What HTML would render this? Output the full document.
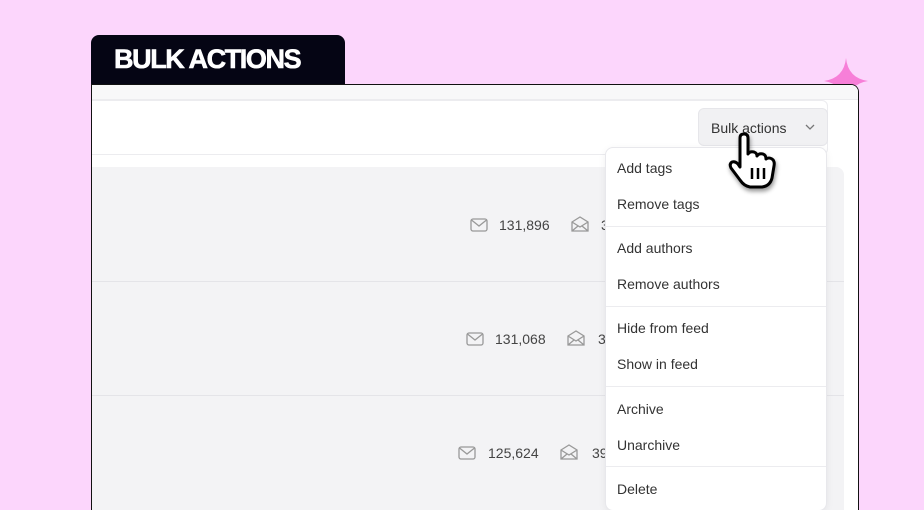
<!DOCTYPE html>
<html><head><style>
*{margin:0;padding:0;box-sizing:border-box}
html,body{width:924px;height:510px;overflow:hidden}
body{background:#fcd6fc;font-family:"Liberation Sans",sans-serif;position:relative}
.tab{position:absolute;left:91px;top:35px;width:254px;height:50px;background:#050514;border-radius:8px 8px 0 0;color:#fff;font-weight:bold;font-size:27px;letter-spacing:-1.4px;padding:9px 0 0 23px;-webkit-text-stroke:0.6px #fff}
.win{position:absolute;left:91px;top:84px;width:768px;height:426px;background:#fff;border:1px solid #111;border-bottom:none;border-radius:0 8px 0 0;overflow:hidden}
.topstrip{position:absolute;left:0;top:0;width:768px;height:15px;background:#f8f8f9;border-bottom:1px solid #ececef}
.card{position:absolute;left:0;top:15px;width:736px;height:55px;background:#fff;border:1px solid #ececef;border-left:none;border-radius:0 6px 6px 0}
.btn{position:absolute;left:606px;top:23px;width:130px;height:38px;background:#f1f1f3;border:1px solid #e6e6ea;border-radius:6px;font-size:14px;color:#333;padding:11px 0 0 12px}
.rows{position:absolute;left:0;top:82px;width:752px;height:360px;background:#f3f3f5;border-radius:0 8px 0 0}
.sep{position:absolute;left:0;width:752px;height:1px;background:#e4e4e8}
.stat{position:absolute;font-size:14px;color:#444}
.menu{position:absolute;left:605px;top:147px;width:222px;height:364px;background:#fff;border:1px solid #e8e8ec;border-radius:8px;box-shadow:0 2px 8px rgba(0,0,0,.06)}
.item{position:absolute;left:11px;font-size:14px;color:#333}
.hr{position:absolute;left:0;width:220px;height:1px;background:#ececef}
</style></head><body>
<div class="tab">BULK ACTIONS</div>
<svg style="position:absolute;left:820px;top:56px" width="50" height="52" viewBox="0 0 50 52"><path d="M26 2 Q28 22 48 25 Q28 28 26 50 Q24 28 4 25 Q24 22 26 2Z" fill="#f77fd8"/></svg>
<div class="win">
<div class="topstrip"></div>
<div class="card"></div>
<div class="btn">Bulk actions<svg style="position:absolute;right:12px;top:15px" width="10" height="6"><path d="M1 1 L5 5 L9 1" fill="none" stroke="#777" stroke-width="1.3"/></svg></div>
<div class="rows">
<div class="sep" style="top:114px"></div>
<div class="sep" style="top:228px"></div>
</div>
<svg style="position:absolute;left:378px;top:133px" width="18" height="14"><rect x="1" y="1" width="16" height="12" rx="2" fill="none" stroke="#999" stroke-width="1.3"/><path d="M1.5 2 L9 8 L16.5 2" fill="none" stroke="#999" stroke-width="1.3"/></svg>
<div class="stat" style="left:407px;top:132px">131,896</div>
<svg style="position:absolute;left:479px;top:131px" width="18" height="16"><path d="M1 6 L9 1 L17 6 V15 H1Z M1 6 L9 11 L17 6 M1 15 L7 10 M17 15 L11 10" fill="none" stroke="#999" stroke-width="1.3"/></svg>
<svg style="position:absolute;left:374px;top:247px" width="18" height="14"><rect x="1" y="1" width="16" height="12" rx="2" fill="none" stroke="#999" stroke-width="1.3"/><path d="M1.5 2 L9 8 L16.5 2" fill="none" stroke="#999" stroke-width="1.3"/></svg>
<div class="stat" style="left:403px;top:246px">131,068</div>
<svg style="position:absolute;left:475px;top:245px" width="18" height="16"><path d="M1 6 L9 1 L17 6 V15 H1Z M1 6 L9 11 L17 6 M1 15 L7 10 M17 15 L11 10" fill="none" stroke="#999" stroke-width="1.3"/></svg>
<svg style="position:absolute;left:366px;top:361px" width="18" height="14"><rect x="1" y="1" width="16" height="12" rx="2" fill="none" stroke="#999" stroke-width="1.3"/><path d="M1.5 2 L9 8 L16.5 2" fill="none" stroke="#999" stroke-width="1.3"/></svg>
<div class="stat" style="left:396px;top:360px">125,624</div>
<svg style="position:absolute;left:468px;top:359px" width="18" height="16"><path d="M1 6 L9 1 L17 6 V15 H1Z M1 6 L9 11 L17 6 M1 15 L7 10 M17 15 L11 10" fill="none" stroke="#999" stroke-width="1.3"/></svg>
<div class="stat" style="left:500px;top:360px">39</div>
<div class="stat" style="left:509px;top:132px">3</div>
<div class="stat" style="left:506px;top:246px">3</div>
</div>
<div class="menu">
<div class="item" style="top:12px">Add tags</div>
<div class="item" style="top:48px">Remove tags</div>
<div class="hr" style="top:78px"></div>
<div class="item" style="top:92px">Add authors</div>
<div class="item" style="top:128px">Remove authors</div>
<div class="hr" style="top:158px"></div>
<div class="item" style="top:172px">Hide from feed</div>
<div class="item" style="top:208px">Show in feed</div>
<div class="hr" style="top:238px"></div>
<div class="item" style="top:253px">Archive</div>
<div class="item" style="top:289px">Unarchive</div>
<div class="hr" style="top:318px"></div>
<div class="item" style="top:333px">Delete</div>
</div>
<svg style="position:absolute;left:726px;top:132px;filter:drop-shadow(1px 3px 2px rgba(0,0,0,.4))" width="58" height="60" viewBox="0 0 58 60">
<path d="M14 6 Q14 2 18 2 Q22 2 22 6 V22 Q24 19 28 20 Q31 21 31 24 Q33 21 37 22 Q40 23 40 27 Q43 25 46 27 Q49 29 48 34 L46 46 Q44 54 36 55 L24 55 Q18 54 14 48 L5 36 Q3 32 6 30 Q9 29 12 32 L14 35 Z" fill="#fff" stroke="#000" stroke-width="3" stroke-linejoin="round"/>
<path d="M26 36 V47 M32 36 V47 M38 36 V47" stroke="#000" stroke-width="2.5"/>
</svg>
</body></html>
